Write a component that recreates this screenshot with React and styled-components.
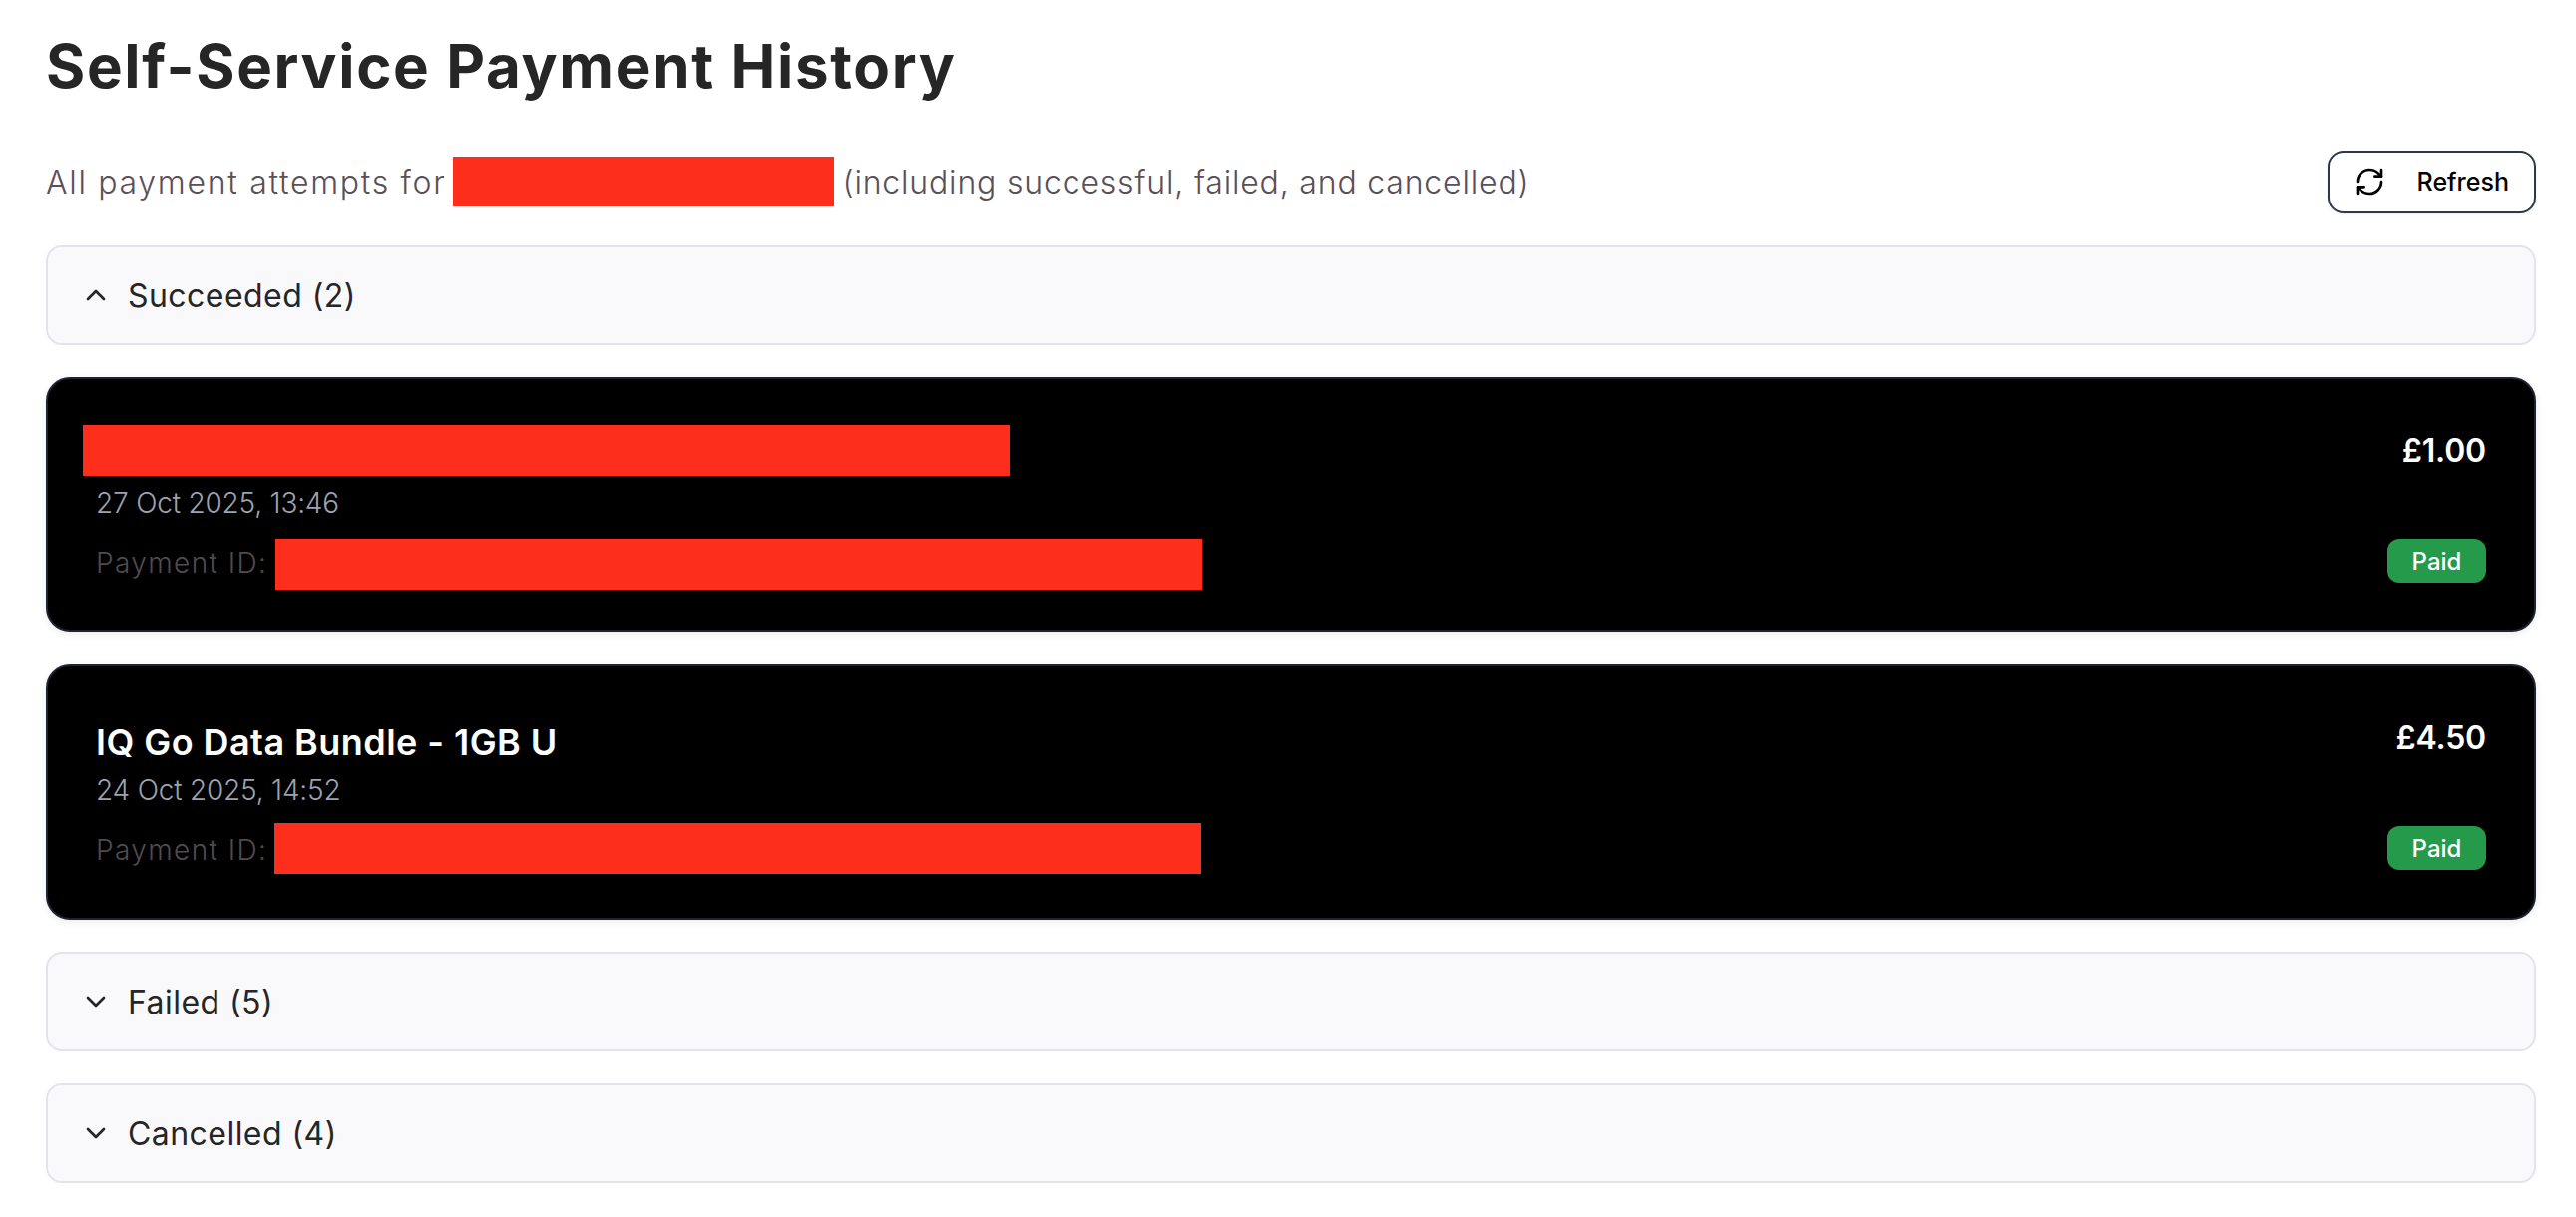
import React from "react";
import styled, { createGlobalStyle } from "styled-components";
import { ChevronDown, ChevronUp, RefreshCw } from "lucide-react";

const Global = createGlobalStyle`
  html, body {
    margin: 0;
    padding: 0;
    background: #fff;
    font-family: "Inter", "Noto Sans", sans-serif;
  }
  * { box-sizing: border-box; }
`;

const Page = styled.div`
  width: 2582px;
  padding: 26px 40px 0 46px;
`;

const Heading = styled.h1`
  margin: 0 0 44px;
  font-size: 60px;
  line-height: 80px;
  font-weight: 700;
  letter-spacing: 1.65px;
  color: #262626;
`;

const TopRow = styled.div`
  display: flex;
  justify-content: space-between;
  align-items: center;
  height: 64px;
  margin-bottom: 32px;
`;

const Intro = styled.div`
  display: flex;
  align-items: center;
  font-size: 32px;
  font-weight: 300;
  color: #5a5058;
  white-space: nowrap;
`;

const IntroText = styled.span`
  letter-spacing: ${(p) => p.$spacing}px;
`;

const Redaction = styled.span`
  display: block;
  flex: none;
  width: ${(p) => p.$w}px;
  height: ${(p) => p.$h || 51}px;
  margin: ${(p) => -6 + (p.$dy || 0)}px ${(p) => p.$mr || 0}px ${(p) => -6 - (p.$dy || 0)}px
    ${(p) => p.$ml || 0}px;
  background: #fd2e1b;
`;

const RefreshButton = styled.button`
  display: flex;
  align-items: center;
  justify-content: space-between;
  width: 209px;
  height: 63px;
  padding: 0 25px 0 24px;
  background: #fff;
  border: 2px solid #2d3748;
  border-radius: 16px;
  box-shadow: 0 1px 3px rgba(0, 0, 0, 0.08);
  font-family: inherit;
  font-size: 25px;
  font-weight: 500;
  color: #000;
`;

const Stack = styled.div`
  display: flex;
  flex-direction: column;
  gap: 32px;
`;

const Section = styled.div`
  display: flex;
  align-items: center;
  gap: 16px;
  height: 100px;
  padding: 0 32px;
  background: #f9f9fb;
  border: 2px solid #e3e3ec;
  border-radius: 16px;
  font-size: 32px;
  font-weight: 400;
  letter-spacing: 0.45px;
  color: #262626;

  svg { flex: none; }
`;

const Card = styled.div`
  display: flex;
  justify-content: space-between;
  height: 256px;
  padding: 48px;
  background: #000;
  border: 2px solid #1e2433;
  border-radius: 24px;
  box-shadow: 0 2px 8px rgba(0, 0, 0, 0.08);
`;

const Info = styled.div`
  display: flex;
  flex-direction: column;
`;

const ItemTitle = styled.div`
  position: relative;
  height: 56px;
  font-size: 36px;
  line-height: 56px;
  font-weight: 600;
  letter-spacing: 0.45px;
  color: #fff;
`;

const TitleMask = styled.span`
  position: absolute;
  left: -13px;
  top: -2px;
  width: 929px;
  height: 51px;
  background: #fd2e1b;
`;

const When = styled.div`
  font-size: 28px;
  line-height: 40px;
  font-weight: 300;
  letter-spacing: -0.2px;
  color: #9ca3af;
`;

const PaymentRow = styled.div`
  display: flex;
  align-items: center;
  height: 40px;
  margin-top: 20px;
  font-size: 28px;
  font-weight: 300;
  letter-spacing: 1.4px;
  color: #524a50;
`;

const Side = styled.div`
  display: flex;
  flex-direction: column;
  justify-content: space-between;
  align-items: flex-end;
`;

const Amount = styled.div`
  font-size: 32px;
  line-height: 48px;
  font-weight: 600;
  letter-spacing: -0.2px;
  color: #fff;
`;

const Badge = styled.div`
  display: flex;
  align-items: center;
  justify-content: center;
  width: 99px;
  height: 44px;
  background: #259a4a;
  border-radius: 12px;
  font-size: 24px;
  font-weight: 500;
  color: #fff;
`;

const PaymentCard = ({ title, when, amount, maskGap, maskShift }) => (
  <Card>
    <Info>
      <ItemTitle>{title || <TitleMask />}</ItemTitle>
      <When>{when}</When>
      <PaymentRow>
        Payment ID:
        <Redaction $w={929} $ml={maskGap} $dy={maskShift} />
      </PaymentRow>
    </Info>
    <Side>
      <Amount>{amount}</Amount>
      <Badge>Paid</Badge>
    </Side>
  </Card>
);

const Group = ({ open, label }) => (
  <Section>
    {open ? <ChevronUp size={32} strokeWidth={2} /> : <ChevronDown size={32} strokeWidth={2} />}
    {label}
  </Section>
);

export default function App() {
  return (
    <Page>
      <Global />
      <Heading>Self-Service Payment History</Heading>
      <TopRow>
        <Intro>
          <IntroText $spacing={1.7}>All payment attempts for</IntroText>
          <Redaction $w={382} $h={50} $ml={7} $mr={8} />
          <IntroText $spacing={0.82}>(including successful, failed, and cancelled)</IntroText>
        </Intro>
        <RefreshButton>
          <RefreshCw size={32} strokeWidth={2} />
          Refresh
        </RefreshButton>
      </TopRow>
      <Stack>
        <Group open label="Succeeded (2)" />
        <PaymentCard when="27 Oct 2025, 13:46" amount="£1.00" maskGap={8} maskShift={1.5} />
        <PaymentCard
          title="IQ Go Data Bundle - 1GB U"
          when="24 Oct 2025, 14:52"
          amount="£4.50"
          maskGap={7}
          maskShift={-1.5}
        />
        <Group label="Failed (5)" />
        <Group label="Cancelled (4)" />
      </Stack>
    </Page>
  );
}
